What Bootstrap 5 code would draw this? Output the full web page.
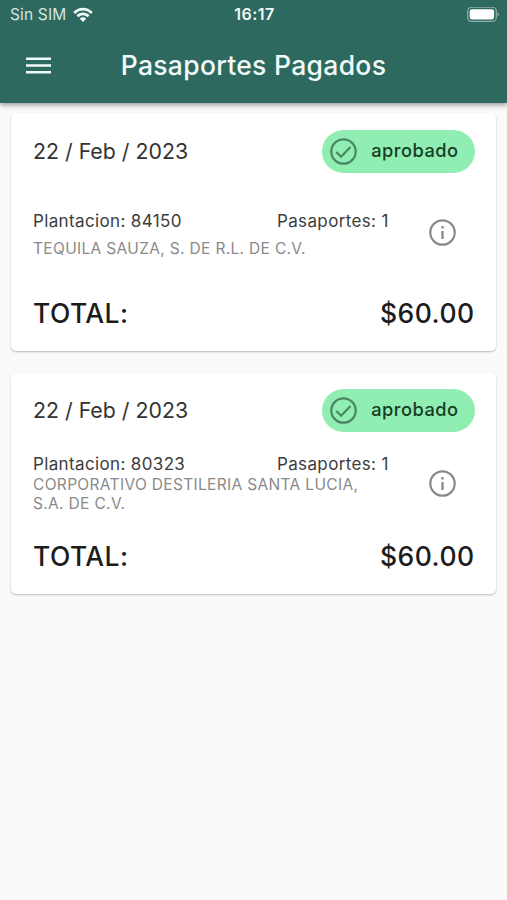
<!DOCTYPE html>
<html lang="es">
<head>
<meta charset="utf-8">
<meta name="viewport" content="width=device-width, initial-scale=1">
<title>Pasaportes Pagados</title>
<link href="https://cdn.jsdelivr.net/npm/bootstrap@5.3.0/dist/css/bootstrap.min.css" rel="stylesheet">
<style>
body{font-family:Inter,"Liberation Sans",sans-serif;background:#fafafa;color:#222;min-height:900px}
svg{display:block;flex:none}
.app-top{background:#2e695f;color:#f0faf8;height:103px;box-shadow:0 2px 5px rgba(0,0,0,.4)}
.status-bar{height:29px;padding:0 8px 0 10px;font-size:15.5px;line-height:29px}
.status-bar>*{flex:1 1 0}
.carrier{color:#d3e6e1;letter-spacing:.15px}
.carrier svg{margin-left:7px}
.clock{font-weight:600;font-size:16px;letter-spacing:.5px}
.bar-title{height:74px;padding:0 26px}
.bar-title h1{font-size:26.5px;font-weight:500;line-height:72px;padding-bottom:2px;letter-spacing:.3px}
.bar-title svg{margin-bottom:2px}
.side{width:25px}
.list-area{padding:10px 11px 0 11px}
.pass-card{background:#fff;border:0;border-radius:5px;box-shadow:0 1px 2px rgba(0,0,0,.26);padding:0 21.5px 0 22px}
.pass-one{height:238px;margin-bottom:22px;padding-top:17px}
.pass-two{height:221px;padding-top:16px}
.date{font-size:21.3px;line-height:43px;color:#333}
.chip{width:153px;height:43px;background:#90eeb2;color:#163c26;padding:0 16px 0 8px;font-size:18.3px;font-weight:500;letter-spacing:.45px;line-height:39px}
.chip span{padding-bottom:2px}
.info-row{font-size:17px;line-height:20px;color:#3c3c3c;letter-spacing:.36px}
.company{font-size:15.5px;color:#8a8a8a;line-height:19px;letter-spacing:.33px}
.total-row{font-size:26.500px;font-weight:450;line-height:34px;letter-spacing:.45px;color:#1c1c1c}
.plant{width:244px}
.pass-one .details{margin-top:38px;height:46px}
.pass-one .company{margin-top:8px}
.pass-one .total-row{margin-top:39px}
.pass-two .details{margin-top:22px;height:59px}
.pass-two .company{margin-top:1px}
.pass-two .total-row{margin-top:26px}
.info-icon{margin-right:19px}
.pass-one .info-icon{margin-top:8px}
.pass-two .info-icon{margin-top:16px}
</style>
<script src="https://cdn.jsdelivr.net/npm/bootstrap@5.3.0/dist/js/bootstrap.bundle.min.js"></script>
</head>
<body>
<header class="app-top position-relative">
  <div class="status-bar d-flex align-items-center">
    <div class="d-flex align-items-center carrier"><span>Sin SIM</span>
      <svg width="20" height="15" viewBox="0 0 20 15" fill="#f0faf8"><path d="M.2 5C5.7-.8 14.3-.8 19.800 5l-1.900 1.950C13.500 2.300 6.500 2.300 2.100 6.950z"/><path d="M3.500 8.350C7.100 4.600 12.900 4.600 16.500 8.350l-1.900 1.950c-2.600-2.700-6.600-2.700-9.200 0z"/><path d="M6.800 11.700c1.800-1.850 4.600-1.850 6.400 0L10 14.900z"/></svg>
    </div>
    <span class="clock text-center">16:17</span>
    <div class="d-flex justify-content-end">
      <svg width="33" height="16" viewBox="0 0 33 16"><rect x="1.700" y=".2" width="28.600" height="14.200" rx="4" fill="none" stroke="#8fb0aa" stroke-width="1.200"/><rect x="3.700" y="2.200" width="24.400" height="10.200" rx="2.300" fill="#fff"/><path d="M31.500 5q1.400.8 1.400 2.300t-1.400 2.300z" fill="#8fb0aa"/></svg>
    </div>
  </div>
  <div class="bar-title d-flex justify-content-between align-items-center">
    <svg class="side" width="25" height="17" viewBox="0 0 25 17" stroke="#f0faf8" stroke-width="2.600"><path d="M0 1.800h25M0 8.500h25M0 15.200h25"/></svg>
    <h1 class="m-0">Pasaportes Pagados</h1>
    <span class="side"></span>
  </div>
</header>
<main class="list-area">
  <section class="card pass-card pass-one">
    <div class="d-flex justify-content-between">
      <span class="date">22 / Feb / 2023</span>
      <span class="chip rounded-pill d-flex align-items-center justify-content-between">
        <svg width="27" height="27" viewBox="0 0 27 27" fill="none" stroke="#4b8662" stroke-width="2.200"><circle cx="13.500" cy="13.500" r="12.200"/><path d="m6.300 14 4.800 4.700L20.500 9.100"/></svg>
        <span>aprobado</span>
      </span>
    </div>
    <div class="details d-flex justify-content-between align-items-start">
      <div>
        <div class="info-row d-flex"><span class="plant">Plantacion: 84150</span><span>Pasaportes: 1</span></div>
        <div class="company">TEQUILA SAUZA, S. DE R.L. DE C.V.</div>
      </div>
      <svg class="info-icon" width="27" height="27" viewBox="0 0 27 27" fill="none" stroke="#8a8a8a" stroke-width="2.200"><circle cx="13.500" cy="13.500" r="12.200"/><path d="M13.500 12v8M13.500 7v2.600" stroke-width="2.300"/></svg>
    </div>
    <div class="total-row d-flex justify-content-between"><span>TOTAL:</span><span>$60.00</span></div>
  </section>
  <section class="card pass-card pass-two">
    <div class="d-flex justify-content-between">
      <span class="date">22 / Feb / 2023</span>
      <span class="chip rounded-pill d-flex align-items-center justify-content-between">
        <svg width="27" height="27" viewBox="0 0 27 27" fill="none" stroke="#4b8662" stroke-width="2.200"><circle cx="13.500" cy="13.500" r="12.200"/><path d="m6.300 14 4.800 4.700L20.500 9.100"/></svg>
        <span>aprobado</span>
      </span>
    </div>
    <div class="details d-flex justify-content-between align-items-start">
      <div>
        <div class="info-row d-flex"><span class="plant">Plantacion: 80323</span><span>Pasaportes: 1</span></div>
        <div class="company">CORPORATIVO DESTILERIA SANTA LUCIA,<br>S.A. DE C.V.</div>
      </div>
      <svg class="info-icon" width="27" height="27" viewBox="0 0 27 27" fill="none" stroke="#8a8a8a" stroke-width="2.200"><circle cx="13.500" cy="13.500" r="12.200"/><path d="M13.500 12v8M13.500 7v2.600" stroke-width="2.300"/></svg>
    </div>
    <div class="total-row d-flex justify-content-between"><span>TOTAL:</span><span>$60.00</span></div>
  </section>
</main>
</body>
</html>
